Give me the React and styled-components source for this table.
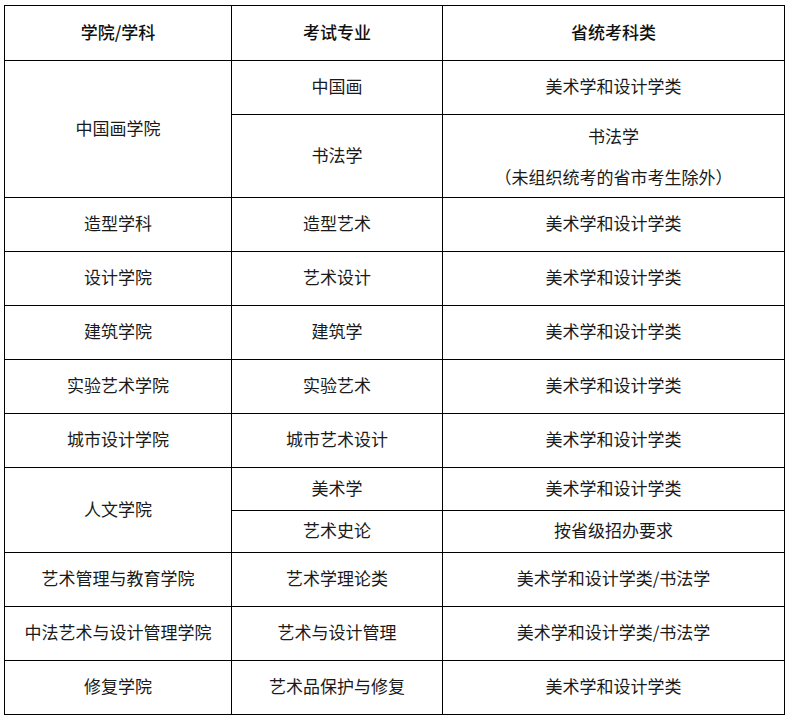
import React from "react";
import styled, { createGlobalStyle } from "styled-components";

const Global = createGlobalStyle`
  html, body { margin: 0; padding: 0; background: #fff; }
  body { font-family: "Noto Sans CJK SC", "Noto Sans", sans-serif; color: #111; }
`;

const Page = styled.div`
  padding: 5px 0 0 4px;
`;

const Table = styled.table`
  border-collapse: collapse;
  table-layout: fixed;
  width: 780px;
`;

const Cell = styled.td`
  border: 1px solid #000;
  text-align: center;
  vertical-align: middle;
  font-size: 17px;
  line-height: 20px;
  padding: 0 0 3px;
  color: #1a1a1a;
`;

const HeadCell = styled(Cell).attrs({ as: "th" })`
  font-weight: 500;
  color: #111;
`;

const Row = styled.tr`
  height: ${(p) => p.$h}px;
`;

const Stack = styled.div`
  display: flex;
  flex-direction: column;
  align-items: center;
  gap: 21px;
  padding-top: 4px;
`;

const rows = [
  { h: 54, a: "中国画学院", aSpan: 2, b: "中国画", c: "美术学和设计学类" },
  { h: 83, b: "书法学", c: ["书法学", "（未组织统考的省市考生除外）"] },
  { h: 54, a: "造型学科", b: "造型艺术", c: "美术学和设计学类" },
  { h: 54, a: "设计学院", b: "艺术设计", c: "美术学和设计学类" },
  { h: 54, a: "建筑学院", b: "建筑学", c: "美术学和设计学类" },
  { h: 54, a: "实验艺术学院", b: "实验艺术", c: "美术学和设计学类" },
  { h: 54, a: "城市设计学院", b: "城市艺术设计", c: "美术学和设计学类" },
  { h: 43, a: "人文学院", aSpan: 2, b: "美术学", c: "美术学和设计学类" },
  { h: 42, b: "艺术史论", c: "按省级招办要求" },
  { h: 54, a: "艺术管理与教育学院", b: "艺术学理论类", c: "美术学和设计学类/书法学" },
  { h: 54, a: "中法艺术与设计管理学院", b: "艺术与设计管理", c: "美术学和设计学类/书法学" },
  { h: 54, a: "修复学院", b: "艺术品保护与修复", c: "美术学和设计学类" },
];

export default function App() {
  return (
    <>
      <Global />
      <Page>
        <Table>
          <colgroup>
            <col style={{ width: 227 }} />
            <col style={{ width: 211 }} />
            <col style={{ width: 342 }} />
          </colgroup>
          <thead>
            <Row $h={55}>
              <HeadCell>学院/学科</HeadCell>
              <HeadCell>考试专业</HeadCell>
              <HeadCell>省统考科类</HeadCell>
            </Row>
          </thead>
          <tbody>
            {rows.map((r, i) => (
              <Row key={i} $h={r.h}>
                {r.a && <Cell rowSpan={r.aSpan || 1}>{r.a}</Cell>}
                <Cell>{r.b}</Cell>
                <Cell>
                  {Array.isArray(r.c) ? (
                    <Stack>
                      {r.c.map((t) => (
                        <span key={t}>{t}</span>
                      ))}
                    </Stack>
                  ) : (
                    r.c
                  )}
                </Cell>
              </Row>
            ))}
          </tbody>
        </Table>
      </Page>
    </>
  );
}
